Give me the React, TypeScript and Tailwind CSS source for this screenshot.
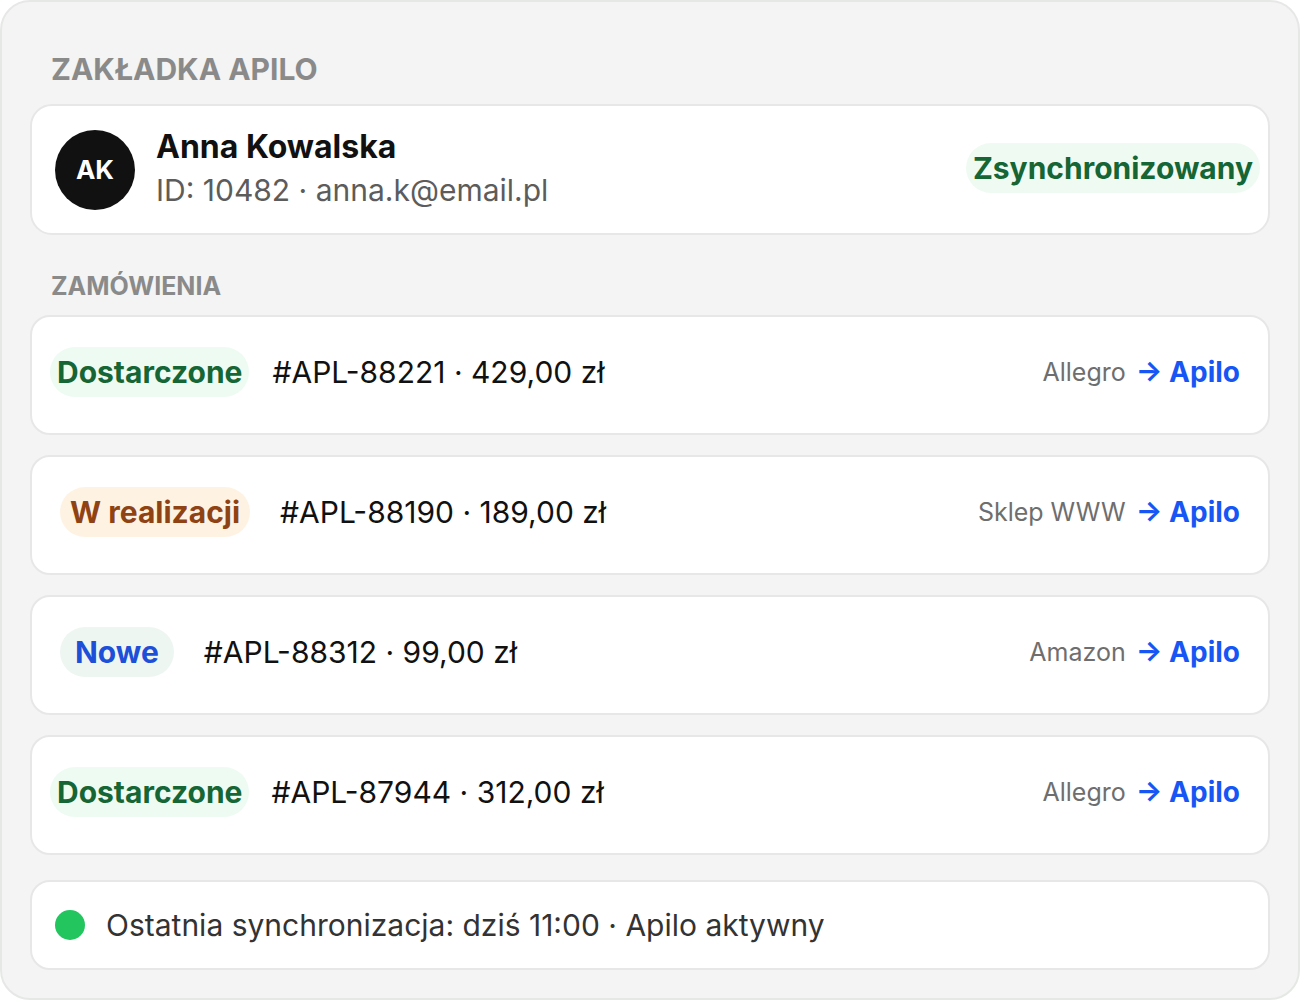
const ORDERS = [
  {
    status: 'Dostarczone',
    badge: 'bg-[#edfbf2] text-[#166534] px-[7px]',
    indent: 'ml-0',
    gap: 'ml-[23px]',
    ref: '#APL-88221 · 429,00 zł',
    source: 'Allegro',
  },
  {
    status: 'W realizacji',
    badge: 'bg-[#fef3e3] text-[#8f4314] px-[10px]',
    indent: 'ml-[10px]',
    gap: 'ml-[30px]',
    ref: '#APL-88190 · 189,00 zł',
    source: 'Sklep WWW',
  },
  {
    status: 'Nowe',
    badge: 'bg-[#eef6f2] text-[#1d4fd8] px-[15px]',
    indent: 'ml-[10px]',
    gap: 'ml-[30px]',
    ref: '#APL-88312 · 99,00 zł',
    source: 'Amazon',
  },
  {
    status: 'Dostarczone',
    badge: 'bg-[#edfbf2] text-[#166534] px-[7px]',
    indent: 'ml-0',
    gap: 'ml-[22px]',
    ref: '#APL-87944 · 312,00 zł',
    source: 'Allegro',
  },
]

export default function App() {
  return (
    <div className="w-[1300px] h-[1000px] bg-white font-['Inter','Noto_Sans',sans-serif]">
      <div className="h-full rounded-[30px] border-2 border-[#e6e8e6] bg-[#f3f4f3] px-[28px] pt-[52px] pb-[28px] flex flex-col">
        <h1 className="pl-[21px] text-[30px] leading-none font-bold text-[#8a8a8a]">ZAKŁADKA APILO</h1>

        {/* Customer card */}
        <div className="mt-[20px] flex items-center rounded-[22px] border-2 border-[#e7e7e7] bg-white pl-[23px] pr-[8px] pt-[24px] pb-[23px]">
          <div className="w-[80px] h-[80px] rounded-full bg-[#111111] flex items-center justify-center text-white text-[26px] font-bold leading-none">
            AK
          </div>
          <div className="ml-[21px] mb-[5px] flex flex-col gap-[12px]">
            <div className="text-[32px] leading-none font-bold text-[#111111]">Anna Kowalska</div>
            <div className="text-[30px] leading-none text-[#5c5c5c]">ID: 10482 · anna.k@email.pl</div>
          </div>
          <span className="ml-auto mb-[5px] rounded-full bg-[#effbf2] px-[7px] py-[10px] text-[30px] leading-none font-bold text-[#166534]">
            Zsynchronizowany
          </span>
        </div>

        <h2 className="mt-[39px] pl-[21px] text-[25px] leading-none font-bold text-[#8a8a8a]">ZAMÓWIENIA</h2>

        {/* Orders */}
        <div className="mt-[16px] flex flex-col gap-[20px]">
          {ORDERS.map((o) => (
            <div
              key={o.ref}
              className="flex items-center rounded-[20px] border-2 border-[#e7e7e7] bg-white pl-[18px] pr-[28px] pt-[30px] pb-[36px]"
            >
              <span className={`${o.indent} ${o.badge} rounded-full py-[10px] text-[30px] leading-none font-bold`}>
                {o.status}
              </span>
              <span className={`${o.gap} text-[30px] leading-none text-[#111111]`}>{o.ref}</span>
              <div className="ml-auto flex items-center">
                <span className="text-[25px] leading-none text-[#6e6e6e]">{o.source}</span>
                <span className="ml-[10px] text-[28px] leading-none font-bold text-[#1756f5]">→ Apilo</span>
              </div>
            </div>
          ))}
        </div>

        {/* Sync status */}
        <div className="mt-[25px] flex items-center rounded-[20px] border-2 border-[#e7e7e7] bg-white pl-[23px] py-[28px]">
          <span className="w-[30px] h-[30px] rounded-full bg-[#22c55e]" />
          <span className="ml-[21px] text-[30px] leading-none text-[#333333]">
            Ostatnia synchronizacja: dziś 11:00 · Apilo aktywny
          </span>
        </div>
      </div>
    </div>
  )
}
